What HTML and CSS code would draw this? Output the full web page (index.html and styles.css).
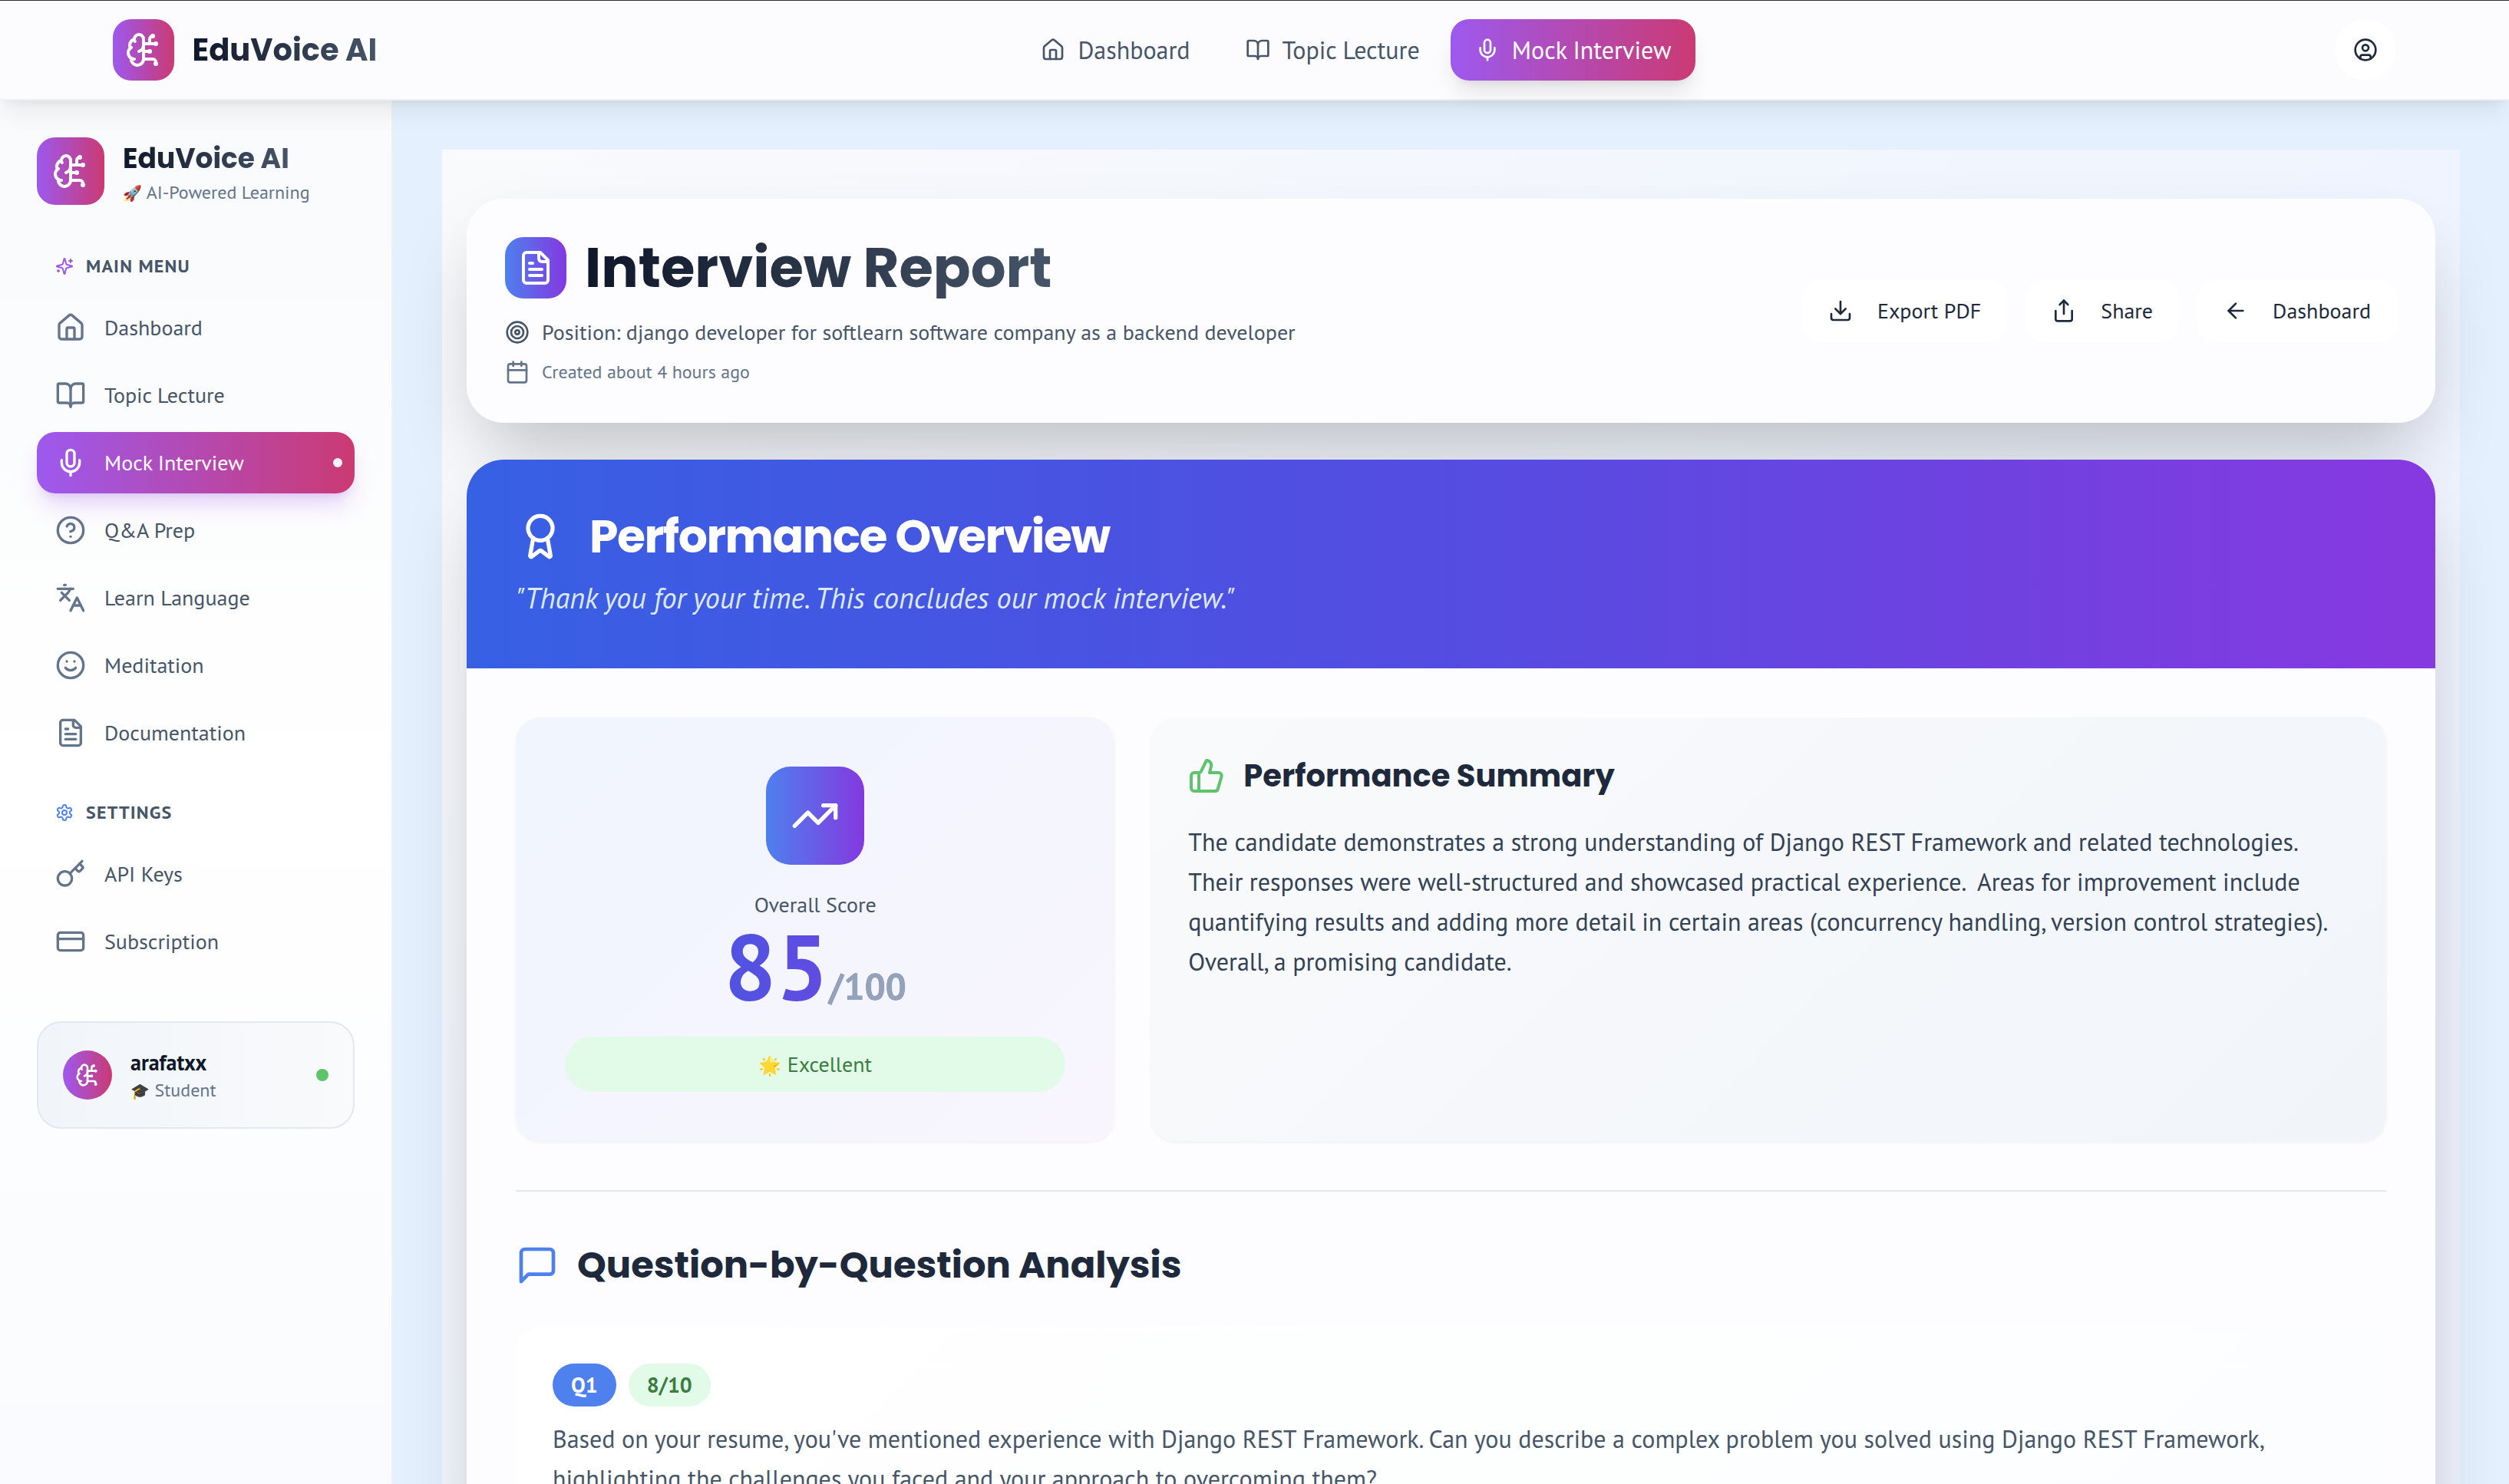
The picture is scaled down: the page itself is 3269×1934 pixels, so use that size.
FILE: index.html
```html
<!DOCTYPE html>
<html lang="en">
<head>
<meta charset="utf-8">
<title>EduVoice AI – Interview Report</title>
<link rel="stylesheet" href="styles.css">
</head>
<body>
<svg class="sprite" aria-hidden="true">
  <symbol id="brain" viewBox="0 0 24 24"><path d="M12 5a3 3 0 1 0-5.997.125 4 4 0 0 0-2.526 5.77 4 4 0 0 0 .556 6.588A4 4 0 1 0 12 18Z"/><path d="M9 13a4.5 4.5 0 0 0 3-4"/><path d="M6.003 5.125A3 3 0 0 0 6.401 6.5"/><path d="M3.477 10.896a4 4 0 0 1 .585-.396"/><path d="M6 18a4 4 0 0 1-1.967-.516"/><path d="M12 13h4"/><path d="M12 18h6a2 2 0 0 1 2 2v1"/><path d="M12 8h8"/><path d="M16 8V5a2 2 0 0 1 2-2"/><circle cx="16" cy="13" r=".5"/><circle cx="18" cy="3" r=".5"/><circle cx="20" cy="21" r=".5"/><circle cx="20" cy="8" r=".5"/></symbol>
  <symbol id="house" viewBox="0 0 24 24"><path d="M15 21v-8a1 1 0 0 0-1-1h-4a1 1 0 0 0-1 1v8"/><path d="M3 10a2 2 0 0 1 .709-1.528l7-5.999a2 2 0 0 1 2.582 0l7 5.999A2 2 0 0 1 21 10v9a2 2 0 0 1-2 2H5a2 2 0 0 1-2-2z"/></symbol>
  <symbol id="book" viewBox="0 0 24 24"><path d="M12 7v14"/><path d="M3 18a1 1 0 0 1-1-1V4a1 1 0 0 1 1-1h5a4 4 0 0 1 4 4 4 4 0 0 1 4-4h5a1 1 0 0 1 1 1v13a1 1 0 0 1-1 1h-6a3 3 0 0 0-3 3 3 3 0 0 0-3-3z"/></symbol>
  <symbol id="mic" viewBox="0 0 24 24"><path d="M12 2a3 3 0 0 0-3 3v7a3 3 0 0 0 6 0V5a3 3 0 0 0-3-3Z"/><path d="M19 10v2a7 7 0 0 1-14 0v-2"/><path d="M12 19v3"/></symbol>
  <symbol id="help" viewBox="0 0 24 24"><circle cx="12" cy="12" r="10"/><path d="M9.09 9a3 3 0 0 1 5.83 1c0 2-3 3-3 3"/><path d="M12 17h.01"/></symbol>
  <symbol id="languages" viewBox="0 0 24 24"><path d="m5 8 6 6"/><path d="m4 14 6-6 2-3"/><path d="M2 5h12"/><path d="M7 2h1"/><path d="m22 22-5-10-5 10"/><path d="M14 18h6"/></symbol>
  <symbol id="smile" viewBox="0 0 24 24"><circle cx="12" cy="12" r="10"/><path d="M8 14s1.5 2 4 2 4-2 4-2"/><path d="M9 9h.01"/><path d="M15 9h.01"/></symbol>
  <symbol id="file" viewBox="0 0 24 24"><path d="M15 2H6a2 2 0 0 0-2 2v16a2 2 0 0 0 2 2h12a2 2 0 0 0 2-2V7Z"/><path d="M14 2v4a2 2 0 0 0 2 2h4"/><path d="M10 9H8"/><path d="M16 13H8"/><path d="M16 17H8"/></symbol>
  <symbol id="key" viewBox="0 0 24 24"><path d="m15.5 7.5 2.3 2.3a1 1 0 0 0 1.4 0l2.1-2.1a1 1 0 0 0 0-1.4L19 4"/><path d="m21 2-9.6 9.6"/><circle cx="7.5" cy="15.5" r="5.5"/></symbol>
  <symbol id="card" viewBox="0 0 24 24"><rect width="20" height="14" x="2" y="5" rx="2"/><path d="M2 10h20"/></symbol>
  <symbol id="sparkles" viewBox="0 0 24 24"><path d="M9.937 15.5A2 2 0 0 0 8.5 14.063l-6.135-1.582a.5.5 0 0 1 0-.962L8.5 9.936A2 2 0 0 0 9.937 8.5l1.582-6.135a.5.5 0 0 1 .963 0L14.063 8.5A2 2 0 0 0 15.5 9.937l6.135 1.581a.5.5 0 0 1 0 .964L15.5 14.063a2 2 0 0 0-1.437 1.437l-1.582 6.135a.5.5 0 0 1-.963 0z"/><path d="M20 3v4"/><path d="M22 5h-4"/><path d="M4 17v2"/><path d="M5 18H3"/></symbol>
  <symbol id="settings" viewBox="0 0 24 24"><path d="M12.22 2h-.44a2 2 0 0 0-2 2v.18a2 2 0 0 1-1 1.73l-.43.25a2 2 0 0 1-2 0l-.15-.08a2 2 0 0 0-2.73.73l-.22.38a2 2 0 0 0 .73 2.73l.15.1a2 2 0 0 1 1 1.72v.51a2 2 0 0 1-1 1.74l-.15.09a2 2 0 0 0-.73 2.73l.22.38a2 2 0 0 0 2.73.73l.15-.08a2 2 0 0 1 2 0l.43.25a2 2 0 0 1 1 1.73V20a2 2 0 0 0 2 2h.44a2 2 0 0 0 2-2v-.18a2 2 0 0 1 1-1.73l.43-.25a2 2 0 0 1 2 0l.15.08a2 2 0 0 0 2.73-.73l.22-.39a2 2 0 0 0-.73-2.73l-.15-.08a2 2 0 0 1-1-1.74v-.5a2 2 0 0 1 1-1.74l.15-.09a2 2 0 0 0 .73-2.73l-.22-.38a2 2 0 0 0-2.73-.73l-.15.08a2 2 0 0 1-2 0l-.43-.25a2 2 0 0 1-1-1.73V4a2 2 0 0 0-2-2z"/><circle cx="12" cy="12" r="3"/></symbol>
  <symbol id="target" viewBox="0 0 24 24"><circle cx="12" cy="12" r="10"/><circle cx="12" cy="12" r="6"/><circle cx="12" cy="12" r="2"/></symbol>
  <symbol id="calendar" viewBox="0 0 24 24"><path d="M8 2v4"/><path d="M16 2v4"/><rect width="18" height="18" x="3" y="4" rx="2"/><path d="M3 10h18"/></symbol>
  <symbol id="download" viewBox="0 0 24 24"><path d="M12 15V3"/><path d="M21 15v4a2 2 0 0 1-2 2H5a2 2 0 0 1-2-2v-4"/><path d="m7 10 5 5 5-5"/></symbol>
  <symbol id="share" viewBox="0 0 24 24"><path d="M12 2v13"/><path d="m16 6-4-4-4 4"/><path d="M4 12v8a2 2 0 0 0 2 2h12a2 2 0 0 0 2-2v-8"/></symbol>
  <symbol id="back" viewBox="0 0 24 24"><path d="m12 19-7-7 7-7"/><path d="M19 12H5"/></symbol>
  <symbol id="user" viewBox="0 0 24 24"><circle cx="12" cy="12" r="10"/><circle cx="12" cy="10" r="3"/><path d="M7 20.662V19a2 2 0 0 1 2-2h6a2 2 0 0 1 2 2v1.662"/></symbol>
  <symbol id="award" viewBox="0 0 24 24"><path d="m15.477 12.89 1.515 8.526a.5.5 0 0 1-.81.47l-3.58-2.687a1 1 0 0 0-1.197 0l-3.586 2.686a.5.5 0 0 1-.81-.469l1.514-8.526"/><circle cx="12" cy="8" r="6"/></symbol>
  <symbol id="trend" viewBox="0 0 24 24"><path d="M16 7h6v6"/><path d="m22 7-8.5 8.5-5-5L2 17"/></symbol>
  <symbol id="thumb" viewBox="0 0 24 24"><path d="M7 10v12"/><path d="M15 5.88 14 10h5.83a2 2 0 0 1 1.92 2.56l-2.33 8A2 2 0 0 1 17.5 22H4a2 2 0 0 1-2-2v-8a2 2 0 0 1 2-2h2.76a2 2 0 0 0 1.79-1.11L12 2a3.13 3.13 0 0 1 3 3.88Z"/></symbol>
  <symbol id="message" viewBox="0 0 24 24"><path d="M21 15a2 2 0 0 1-2 2H7l-4 4V5a2 2 0 0 1 2-2h14a2 2 0 0 1 2 2z"/></symbol>
</svg>

<header class="topbar">
  <div class="topbar-inner">
    <a class="brand" href="#">
      <span class="brand-tile"><svg class="icon icon-48"><use href="#brain"/></svg></span>
      <span class="brand-name">EduVoice AI</span>
    </a>
    <nav class="topnav" aria-label="Primary">
      <a class="topnav-link" href="#"><svg class="icon icon-32"><use href="#house"/></svg>Dashboard</a>
      <a class="topnav-link" href="#"><svg class="icon icon-32"><use href="#book"/></svg>Topic Lecture</a>
      <a class="topnav-link topnav-active" href="#"><svg class="icon icon-32"><use href="#mic"/></svg>Mock Interview</a>
    </nav>
    <button class="account" type="button" aria-label="Account"><svg class="icon icon-32"><use href="#user"/></svg></button>
  </div>
</header>

<div class="shell">
  <aside class="sidebar">
    <div class="side-brand">
      <span class="side-tile"><svg class="icon icon-48"><use href="#brain"/></svg></span>
      <div class="side-brand-text">
        <div class="side-name">EduVoice AI</div>
        <div class="side-tag"><span class="emoji-small">🚀</span> AI-Powered Learning</div>
      </div>
    </div>
    <nav class="side-nav" aria-label="Sidebar">
      <section>
        <h2 class="side-label"><svg class="icon icon-24 purple"><use href="#sparkles"/></svg>MAIN MENU</h2>
        <ul class="side-list">
          <li><a class="side-link" href="#"><svg class="icon icon-40"><use href="#house"/></svg>Dashboard</a></li>
          <li><a class="side-link" href="#"><svg class="icon icon-40"><use href="#book"/></svg>Topic Lecture</a></li>
          <li><a class="side-link side-active" href="#"><svg class="icon icon-40"><use href="#mic"/></svg>Mock Interview<span class="active-dot"></span></a></li>
          <li><a class="side-link" href="#"><svg class="icon icon-40"><use href="#help"/></svg>Q&amp;A Prep</a></li>
          <li><a class="side-link" href="#"><svg class="icon icon-40"><use href="#languages"/></svg>Learn Language</a></li>
          <li><a class="side-link" href="#"><svg class="icon icon-40"><use href="#smile"/></svg>Meditation</a></li>
          <li><a class="side-link" href="#"><svg class="icon icon-40"><use href="#file"/></svg>Documentation</a></li>
        </ul>
      </section>
      <section>
        <h2 class="side-label"><svg class="icon icon-24 blue"><use href="#settings"/></svg>SETTINGS</h2>
        <ul class="side-list">
          <li><a class="side-link" href="#"><svg class="icon icon-40"><use href="#key"/></svg>API Keys</a></li>
          <li><a class="side-link" href="#"><svg class="icon icon-40"><use href="#card"/></svg>Subscription</a></li>
        </ul>
      </section>
    </nav>
    <div class="profile">
      <span class="avatar"><svg class="icon icon-32"><use href="#brain"/></svg></span>
      <div class="profile-text">
        <div class="profile-name">arafatxx</div>
        <div class="profile-role"><span class="emoji-small">🎓</span> Student</div>
      </div>
      <span class="online"></span>
    </div>
  </aside>

  <main class="main">
    <div class="page">
      <section class="card report">
        <div>
          <div class="report-title">
            <span class="report-tile"><svg class="icon icon-48"><use href="#file"/></svg></span>
            <h1>Interview Report</h1>
          </div>
          <p class="report-position"><svg class="icon icon-32"><use href="#target"/></svg>Position: django developer for softlearn software company as a backend developer</p>
          <p class="report-created"><svg class="icon icon-32"><use href="#calendar"/></svg>Created about 4 hours ago</p>
        </div>
        <div class="actions">
          <button class="action" type="button"><svg class="icon icon-32"><use href="#download"/></svg>Export PDF</button>
          <button class="action" type="button"><svg class="icon icon-32"><use href="#share"/></svg>Share</button>
          <button class="action" type="button"><svg class="icon icon-32"><use href="#back"/></svg>Dashboard</button>
        </div>
      </section>

      <section class="card overview">
        <div class="overview-head">
          <h2><svg class="icon icon-64"><use href="#award"/></svg>Performance Overview</h2>
          <p>"Thank you for your time. This concludes our mock interview."</p>
        </div>
        <div class="overview-body">
          <div class="stats">
            <div class="score">
              <span class="score-tile"><svg class="icon icon-64"><use href="#trend"/></svg></span>
              <div class="score-label">Overall Score</div>
              <div class="score-value"><span class="score-number">85</span><span class="score-total">/100</span></div>
              <div class="score-grade"><span class="emoji">🌟</span> Excellent</div>
            </div>
            <div class="summary">
              <h3><svg class="icon icon-48 green"><use href="#thumb"/></svg>Performance Summary</h3>
              <p>The candidate demonstrates a strong understanding of Django REST Framework and related technologies. Their responses were well-structured and showcased practical experience.&nbsp; Areas for improvement include quantifying results and adding more detail in certain areas (concurrency handling, version control strategies). Overall, a promising candidate.</p>
            </div>
          </div>
          <hr>
          <h2 class="analysis-title"><svg class="icon icon-56 blue"><use href="#message"/></svg>Question-by-Question Analysis</h2>
          <article class="question">
            <div class="badges">
              <span class="badge badge-number">Q1</span>
              <span class="badge badge-score">8/10</span>
            </div>
            <p>Based on your resume, you've mentioned experience with Django REST Framework. Can you describe a complex problem you solved using Django REST Framework, highlighting the challenges you faced and your approach to overcoming them?</p>
          </article>
        </div>
      </section>
    </div>
  </main>
</div>
</body>
</html>
```
FILE: styles.css
```css
:root {
  --body: "PT Sans", Lato, "Noto Sans", sans-serif;
  --display: Poppins, Inter, "Open Sans", sans-serif;
  --brand: linear-gradient(90deg, #9d59ef, #cb3a73);
  --accent: linear-gradient(90deg, #4e80ee, #8439e0);
  --ink: #1e293b;
  --slate: #475569;
  --muted: #64748b;
  --shadow: 0 50px 100px -24px rgba(0, 0, 0, .25);
}

* { box-sizing: border-box; }

body {
  margin: 0;
  height: 100vh;
  display: flex;
  flex-direction: column;
  overflow: hidden;
  font: 28px/40px var(--body);
  color: var(--slate);
  background: #e4f0fd;
}

h1, h2, h3, p, ul { margin: 0; padding: 0; }
ul { list-style: none; }
a { color: inherit; text-decoration: none; }
button { font: inherit; border: 0; cursor: pointer; }

.sprite { position: absolute; width: 0; height: 0; }
.icon {
  flex: none;
  fill: none;
  stroke: currentColor;
  stroke-width: 2;
  stroke-linecap: round;
  stroke-linejoin: round;
}
.icon-24 { width: 24px; height: 24px; }
.icon-32 { width: 32px; height: 32px; }
.icon-40 { width: 40px; height: 40px; }
.icon-48 { width: 48px; height: 48px; }
.icon-56 { width: 56px; height: 56px; }
.icon-64 { width: 64px; height: 64px; }
.purple { color: #9d59ef; }
.blue { color: #4e80ee; }
.green { color: #5fc36c; }
.emoji-small { font-size: 20px; line-height: 24px; }
.emoji { font-size: 24px; line-height: 32px; }

/* Top bar */
.topbar {
  position: relative;
  z-index: 2;
  flex: none;
  background: #fcfcfe;
  border-top: 1px solid #2e2e32;
  border-bottom: 2px solid #eef0f5;
  box-shadow: 0 20px 30px -6px rgba(0, 0, 0, .07), 0 8px 12px -8px rgba(0, 0, 0, .07);
}
.topbar-inner {
  max-width: 3072px;
  height: 128px;
  margin: 0 auto;
  padding: 0 48px;
  display: flex;
  align-items: center;
  justify-content: space-between;
}
.brand { display: flex; align-items: center; gap: 24px; }
.brand-tile, .side-tile, .avatar, .report-tile, .score-tile {
  flex: none;
  display: flex;
  align-items: center;
  justify-content: center;
  color: #fff;
}
.brand-tile { width: 80px; height: 80px; border-radius: 24px; background: var(--brand); }
.brand-name, .side-name, h1 {
  font-family: var(--display);
  font-weight: 700;
  color: transparent;
  background: linear-gradient(90deg, #0f172a, #475569);
  background-clip: text;
  -webkit-background-clip: text;
}
.brand-name { font-size: 40px; line-height: 56px; }
.topnav { display: flex; gap: 8px; font-size: 32px; line-height: 48px; }
.topnav-link {
  display: flex;
  align-items: center;
  gap: 16px;
  padding: 16px 32px;
  border-radius: 24px;
}
.topnav-active {
  color: #fff;
  background: var(--brand);
  box-shadow: 0 20px 30px -6px rgba(0, 0, 0, .1), 0 8px 12px -8px rgba(0, 0, 0, .1);
}
.account {
  width: 80px;
  height: 80px;
  padding: 0;
  display: flex;
  align-items: center;
  justify-content: center;
  border-radius: 50%;
  background: #fff;
  color: var(--ink);
}

.shell { flex: 1; min-height: 0; display: flex; }

/* Sidebar */
.sidebar {
  flex: none;
  width: 512px;
  padding: 48px;
  border-right: 2px solid #eef0f6;
  background: linear-gradient(180deg, #f9fafc, #fff 50%, #fafbfe);
}
.side-brand { display: flex; align-items: center; gap: 24px; margin-bottom: 64px; }
.side-tile { width: 88px; height: 88px; border-radius: 24px; background: var(--brand); }
.side-brand-text { display: grid; gap: 4px; padding-top: 4px; }
.side-name { width: max-content; font-size: 36px; line-height: 48px; }
.side-tag, .profile-role { font-size: 24px; line-height: 32px; color: var(--muted); }
.side-nav { display: grid; gap: 48px; }
.side-label {
  display: flex;
  align-items: center;
  gap: 16px;
  margin-bottom: 24px;
  padding: 0 24px;
  font-size: 24px;
  line-height: 32px;
  font-weight: 700;
  letter-spacing: .05em;
}
.side-list { display: grid; gap: 8px; }
.side-link {
  position: relative;
  display: flex;
  align-items: center;
  gap: 24px;
  height: 80px;
  padding: 0 24px;
  border-radius: 24px;
}
.side-link .icon { color: var(--muted); }
.side-active {
  color: #fff;
  background: var(--brand);
  box-shadow: 0 20px 30px -6px rgba(157, 89, 239, .25), 0 8px 12px -8px rgba(157, 89, 239, .25);
}
.side-active .icon { color: #fff; }
.active-dot {
  position: absolute;
  top: 34px;
  right: 16px;
  width: 12px;
  height: 12px;
  border-radius: 50%;
  background: #fdf2f8;
}
.profile {
  display: flex;
  align-items: center;
  gap: 24px;
  margin-top: 64px;
  padding: 32px;
  border: 2px solid #e3e8f0;
  border-radius: 32px;
  background: linear-gradient(90deg, #f1f5f9, #f9fafc);
}
.avatar { width: 64px; height: 64px; border-radius: 50%; background: var(--brand); }
.profile-text { flex: 1; }
.profile-name { font-weight: 700; color: #0f172a; }
.online { width: 16px; height: 16px; border-radius: 50%; background: #5fc36c; }

/* Report page */
.main {
  flex: 1;
  min-width: 0;
  padding: 64px;
  overflow-y: auto;
  scrollbar-width: none;
}
.page {
  display: grid;
  gap: 48px;
  padding: 64px 32px;
  background: linear-gradient(135deg, #f9fafc, #f0f5fe 50%, #eef1fe);
}
.card { border-radius: 48px; background: #fdfdff; box-shadow: var(--shadow); }
.report {
  display: flex;
  align-items: center;
  justify-content: space-between;
  padding: 50px;
}
.report-title { display: flex; align-items: center; gap: 24px; margin-bottom: 24px; }
.report-tile { width: 80px; height: 80px; border-radius: 24px; background: var(--accent); }
h1 { font-size: 72px; line-height: 80px; }
.report-position, .report-created { display: flex; align-items: center; gap: 16px; }
.report-position { margin-bottom: 16px; }
.report-created { font-size: 24px; line-height: 32px; color: var(--muted); }
.actions { display: flex; gap: 24px; }
.action {
  display: flex;
  align-items: center;
  gap: 32px;
  height: 80px;
  padding: 0 34px;
  border-radius: 24px;
  background: #fff;
  color: var(--ink);
}

.overview { overflow: hidden; }
.overview-head {
  padding: 64px;
  color: #fff;
  background: linear-gradient(90deg, #3760e3, #544ce0 50%, #8739e0);
}
.overview-head h2 {
  display: flex;
  align-items: center;
  gap: 32px;
  margin-bottom: 16px;
  font: 700 60px/72px var(--display);
  letter-spacing: -.025em;
}
.overview-head p { font-size: 38px; line-height: 56px; font-style: italic; color: #dbe8fd; }
.overview-body { padding: 64px; }
.stats { display: grid; grid-template-columns: repeat(3, 1fr); gap: 48px; }
.score {
  display: flex;
  flex-direction: column;
  align-items: center;
  padding: 64px;
  border-radius: 32px;
  background: linear-gradient(135deg, #f0f5fe, #f8f5fe);
  box-shadow: 0 2px 4px rgba(0, 0, 0, .05);
}
.score-tile {
  width: 128px;
  height: 128px;
  margin-bottom: 32px;
  border-radius: 32px;
  background: var(--accent);
}
.score-value {
  align-self: stretch;
  margin-bottom: 32px;
  text-align: center;
  font-size: 120px;
  line-height: 120px;
  font-weight: 700;
  color: transparent;
  background: linear-gradient(90deg, #3760e3, #8739e0);
  background-clip: text;
  -webkit-background-clip: text;
}
.score-total { font-size: 48px; line-height: 56px; color: #94a3b8; }
.score-grade {
  align-self: stretch;
  padding: 16px;
  border-radius: 36px;
  text-align: center;
  color: #3b7d40;
  background: #e2fae8;
}
.summary {
  grid-column: span 2;
  padding: 48px;
  border-radius: 32px;
  background: linear-gradient(135deg, #f9fafc, #f1f5f9);
  box-shadow: 0 2px 4px rgba(0, 0, 0, .05);
}
.summary h3 {
  display: flex;
  align-items: center;
  gap: 24px;
  margin-bottom: 32px;
  font: 700 40px/56px var(--display);
  color: var(--ink);
}
.summary p { font-size: 32px; line-height: 52px; color: #334155; }
hr { height: 2px; margin: 64px 0; border: 0; background: #e2e8f0; }
.analysis-title {
  display: flex;
  align-items: center;
  gap: 24px;
  margin-bottom: 48px;
  font: 700 48px/64px var(--display);
  color: var(--ink);
}
.question {
  padding: 48px;
  border-radius: 32px;
  background: linear-gradient(135deg, #fff, #fcfdfe);
}
.badges { display: flex; gap: 16px; margin-bottom: 16px; }
.badge { padding: 8px 24px; border-radius: 28px; font-weight: 700; }
.badge-number { color: #fff; background: #4e80ee; }
.badge-score { color: #3b7d40; background: #e2fae8; }
.question p { font-size: 32px; line-height: 52px; }
```
